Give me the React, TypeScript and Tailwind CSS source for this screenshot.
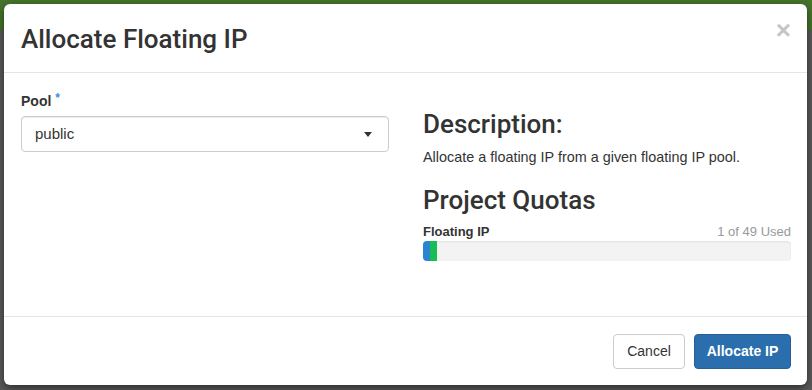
import React from 'react';

const font = { fontFamily: '"Liberation Sans", Arial, sans-serif' };
const heading = { fontFamily: 'Roboto, "Liberation Sans", Arial, sans-serif' };

export default function App() {
  return (
    <div className="w-[812px] h-[390px] bg-[#5a5a5a] overflow-hidden relative" style={font}>
      {/* dimmed page behind the dialog */}
      <div className="h-[30px] bg-[#46742b]" />

      <div className="absolute left-[4px] top-[4px] w-[803px] h-[381px] bg-white rounded-[6px] shadow-[0_3px_9px_rgba(0,0,0,0.5)] flex flex-col text-[#333]">
        <div className="h-[69px] shrink-0 border-b border-[#e5e5e5] flex items-center justify-between pl-[17px] pr-[16px]">
          <h3 className="text-[26px] leading-none font-medium text-[#333] mt-[1px]" style={heading}>
            Allocate Floating IP
          </h3>
          <button className="text-[#c5c5c5] text-[26px] font-bold leading-none -mt-[16px]">×</button>
        </div>

        <div className="flex-1 grid grid-cols-2 gap-[34px] pl-[17px] pr-[16px]">
          <div className="pt-[18px]">
            <label className="flex items-start text-[14px] font-bold leading-[20px]">
              Pool
              <span className="text-[#3a8fe0] text-[12px] leading-none ml-[4px] mt-[1px]">*</span>
            </label>
            <div className="mt-[5px] h-[36px] border border-[#ccc] rounded-[4px] flex items-center justify-between pl-[13px] pr-[16px] shadow-[inset_0_1px_1px_rgba(0,0,0,0.075)]">
              <span className="text-[15px] text-[#333]">public</span>
              <span className="w-0 h-0 border-l-[4px] border-r-[4px] border-t-[5px] border-l-transparent border-r-transparent border-t-[#333]" />
            </div>
          </div>

          <div className="pt-[37px]">
            <h3 className="text-[26px] leading-[28px] font-medium" style={heading}>Description:</h3>
            <p className="mt-[10px] text-[14.4px] leading-[18px] text-[#333]">
              Allocate a floating IP from a given floating IP pool.
            </p>
            <h3 className="mt-[20px] text-[26px] leading-[28px] font-medium" style={heading}>Project Quotas</h3>
            <div className="mt-[9px] flex justify-between text-[13px] leading-[18px]">
              <span className="font-bold">Floating IP</span>
              <span className="text-[#999]">1 of 49 Used</span>
            </div>
            <div className="h-[20px] bg-[#f3f3f3] rounded-[4px] overflow-hidden flex shadow-[inset_0_1px_2px_rgba(0,0,0,0.08)]">
              <div className="w-[7px] bg-[#2c83cf]" />
              <div className="w-[7px] bg-[#18bd58]" />
            </div>
          </div>
        </div>

        <div className="h-[69px] shrink-0 border-t border-[#e5e5e5] flex items-center justify-end gap-[9px] pr-[16px] pt-[1px]">
          <button className="h-[35px] w-[72px] border border-[#ccc] rounded-[4px] bg-white text-[14px] text-[#333]">
            Cancel
          </button>
          <button className="h-[35px] w-[97px] border border-[#255f94] rounded-[4px] bg-[#2a6ead] text-[14px] font-bold text-white">
            Allocate IP
          </button>
        </div>
      </div>
    </div>
  );
}
